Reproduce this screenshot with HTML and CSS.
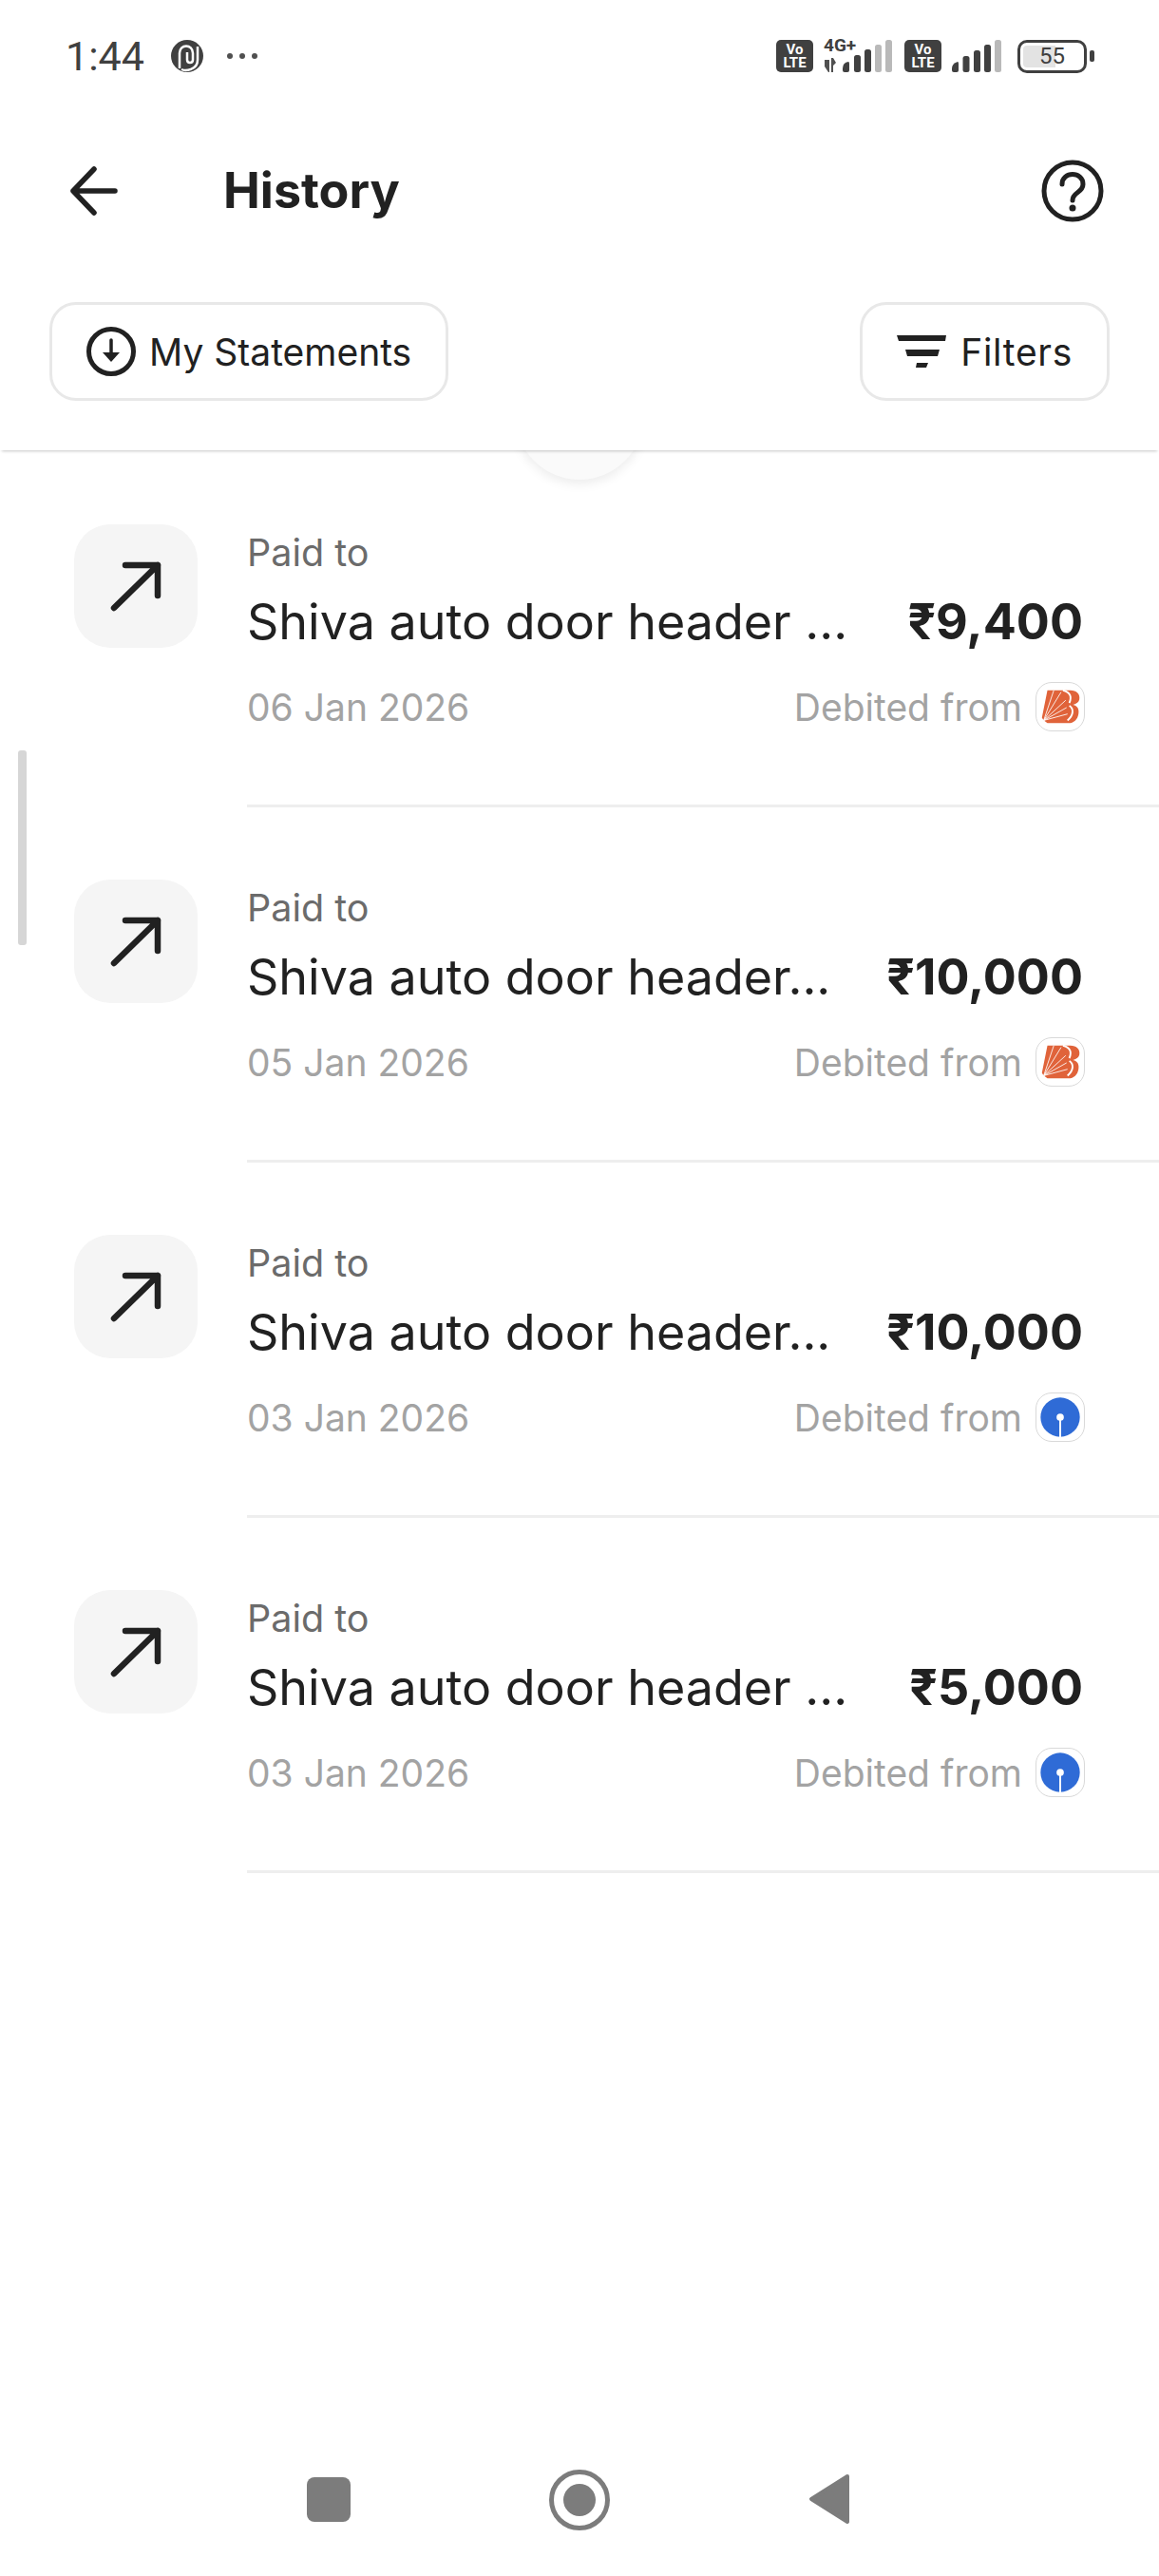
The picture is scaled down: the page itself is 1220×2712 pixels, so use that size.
FILE: index.html
```html
<!DOCTYPE html>
<html lang="en">

<head>
    <meta charset="UTF-8">
    <title>History</title>
    <link rel="stylesheet" href="styles.css">
</head>

<body>
    <svg class="defs" width="0" height="0">
        <symbol id="out-arrow" viewBox="0 0 54 54">
            <path d="M4 50 L50 5 M16 5 H50 V37" fill="none" stroke="#212121" stroke-width="6.500" stroke-linecap="round" stroke-linejoin="round" />
        </symbol>
        <symbol id="bob" viewBox="0 0 52 52">
            <path d="M12 8 H37 C44 8 48 12 47 18 C46.500 21 44 23 40 24 C45 25 47 29 46 34 C45 40 41 44 35 44 H12 C9 42 7 40 6 38 Z" fill="#e0633a" />
            <path d="M8 41 L19 8 M8 41 L27 10 M8 41 L32 19 M8 41 L33 27 M8 41 L34 34" fill="none" stroke="#fff" stroke-width="0.9" />
            <path d="M29 8 C37 10 39 15 36 22 M36 25 C41 28 41 35 34 41" fill="none" stroke="#fff" stroke-width="2" />
        </symbol>
        <symbol id="sbi" viewBox="0 0 52 52">
            <circle cx="26" cy="26" r="21.500" fill="#2f6bd6" />
            <circle cx="26" cy="26" r="4" fill="#fff" />
            <rect x="25" y="26" width="2" height="22" fill="#fff" />
        </symbol>
    </svg>

    <div class="status-bar">
        <span class="clock">1:44</span>
        <svg class="status-app" viewBox="0 0 34 34">
            <circle cx="17" cy="17" r="17" fill="#404040" />
            <path d="M9 30 V14 C9 4 23 4 23 14 V21 C23 25 17 25 17 21 V13 M28 7 V21 C28 32 15 33 11 31" fill="none" stroke="#fff" stroke-width="2.500" />
        </svg>
        <svg class="status-dots" viewBox="0 0 34 8">
            <circle cx="4" cy="4" r="3" fill="#505050" />
            <circle cx="17" cy="4" r="3" fill="#505050" />
            <circle cx="30" cy="4" r="3" fill="#505050" />
        </svg>
        <div class="status-right">
            <div class="volte"><span>Vo</span><span>LTE</span></div>
            <div class="net">
                <span class="net-label">4G+</span>
                <svg class="signal-a" viewBox="0 0 75 34">
                    <path d="M1 21 H6 V34 H5 L1 28 Z M8 19 H10 L13 24 L10 27 V34 H8 Z" fill="#505050" />
                    <path d="M20 30 Q20 24 26 23 Q27 23 27 25 V32 Q27 34 25 34 H22 Q20 34 20 32 Z" fill="#404040" />
                    <rect x="32" y="16" width="7" height="18" rx="2.500" fill="#404040" />
                    <rect x="43" y="10" width="7" height="24" rx="2.500" fill="#404040" />
                    <rect x="54" y="5" width="7" height="29" rx="2.500" fill="#b9b9b9" />
                    <rect x="65" y="0" width="7" height="34" rx="2.500" fill="#b9b9b9" />
                </svg>
            </div>
            <div class="volte"><span>Vo</span><span>LTE</span></div>
            <svg class="signal-b" viewBox="0 0 52 34">
                <path d="M0 30 Q0 25 6 23 Q7 23 7 25 V32 Q7 34 5 34 H2 Q0 34 0 32 Z" fill="#404040" />
                <rect x="11.500" y="17" width="7" height="17" rx="2.500" fill="#404040" />
                <rect x="23" y="11" width="7" height="23" rx="2.500" fill="#404040" />
                <rect x="34" y="5" width="7" height="29" rx="2.500" fill="#404040" />
                <rect x="45" y="0" width="7" height="34" rx="2.500" fill="#b9b9b9" />
            </svg>
            <div class="battery"><div class="battery-level">55</div></div>
            <div class="battery-tip"></div>
        </div>
    </div>

    <div class="app-header">
        <div class="title-bar">
            <svg class="back" viewBox="0 0 52 52">
                <path d="M48 26 H4 M26 3 L4 26 L26 49" fill="none" stroke="#212121" stroke-width="5.500" stroke-linecap="round" stroke-linejoin="round" />
            </svg>
            <h1>History</h1>
            <svg class="help" viewBox="0 0 66 66">
                <circle cx="33" cy="33" r="30" fill="none" stroke="#212121" stroke-width="5" />
                <path d="M22 26 C22 12 44 12 44 26 C44 35 33 34 33 43" fill="none" stroke="#212121" stroke-width="5" stroke-linecap="round" />
                <circle cx="33" cy="51" r="3.500" fill="#212121" />
            </svg>
        </div>
        <div class="toolbar">
            <div class="pill">
                <svg class="pill-icon" viewBox="0 0 52 52">
                    <circle cx="26" cy="26" r="23.500" fill="none" stroke="#212121" stroke-width="5" />
                    <path d="M26 14 V30" stroke="#212121" stroke-width="3.500" stroke-linecap="round" />
                    <path d="M17 27 H35 L26 37 Z" fill="#212121" />
                </svg>
                <span>My Statements</span>
            </div>
            <div class="pill pill-filter">
                <svg class="pill-icon filter-icon" viewBox="0 0 52 34">
                    <path d="M0 0 H52 L51 6 H2 Z M9 15 H45 L43 22 H11 Z M21 29 H33 L31 34 H20 Z" fill="#212121" />
                </svg>
                <span>Filters</span>
            </div>
        </div>
    </div>

    <div class="refresh-peek"></div>
    <div class="scroll-thumb"></div>

    <div class="list">
        <div class="row">
            <div class="tile"><svg class="tile-arrow"><use href="#out-arrow" /></svg></div>
            <div class="row-body">
                <div class="paid">Paid to</div>
                <div class="main-line">
                    <span class="name">Shiva auto door header ...</span>
                    <span class="amount">₹9,400</span>
                </div>
                <div class="meta-line">
                    <span class="date">06 Jan 2026</span>
                    <span class="debit">Debited from <span class="bank"><svg><use href="#bob" /></svg></span></span>
                </div>
            </div>
        </div>
        <div class="row">
            <div class="tile"><svg class="tile-arrow"><use href="#out-arrow" /></svg></div>
            <div class="row-body">
                <div class="paid">Paid to</div>
                <div class="main-line">
                    <span class="name">Shiva auto door header...</span>
                    <span class="amount">₹10,000</span>
                </div>
                <div class="meta-line">
                    <span class="date">05 Jan 2026</span>
                    <span class="debit">Debited from <span class="bank"><svg><use href="#bob" /></svg></span></span>
                </div>
            </div>
        </div>
        <div class="row">
            <div class="tile"><svg class="tile-arrow"><use href="#out-arrow" /></svg></div>
            <div class="row-body">
                <div class="paid">Paid to</div>
                <div class="main-line">
                    <span class="name">Shiva auto door header...</span>
                    <span class="amount">₹10,000</span>
                </div>
                <div class="meta-line">
                    <span class="date">03 Jan 2026</span>
                    <span class="debit">Debited from <span class="bank"><svg><use href="#sbi" /></svg></span></span>
                </div>
            </div>
        </div>
        <div class="row">
            <div class="tile"><svg class="tile-arrow"><use href="#out-arrow" /></svg></div>
            <div class="row-body">
                <div class="paid">Paid to</div>
                <div class="main-line">
                    <span class="name">Shiva auto door header ...</span>
                    <span class="amount">₹5,000</span>
                </div>
                <div class="meta-line">
                    <span class="date">03 Jan 2026</span>
                    <span class="debit">Debited from <span class="bank"><svg><use href="#sbi" /></svg></span></span>
                </div>
            </div>
        </div>
    </div>

    <div class="nav-bar">
        <div class="nav-square"></div>
        <svg class="nav-home" viewBox="0 0 64 64">
            <circle cx="32" cy="32" r="29.500" fill="none" stroke="#7c7c7c" stroke-width="5" />
            <circle cx="32" cy="32" r="17" fill="#7c7c7c" />
        </svg>
        <svg class="nav-back" viewBox="0 0 44 54">
            <path d="M41 3 L3 27 L41 51 Z" fill="#7c7c7c" stroke="#7c7c7c" stroke-width="4" stroke-linejoin="round" />
        </svg>
    </div>
</body>

</html>
```

FILE: styles.css
```css
body {
    margin: 0;
    padding: 0;
    width: 1220px;
    height: 2712px;
    background: #fff;
    color: #212121;
    font-family: "Inter", "Liberation Sans", sans-serif;
    display: flex;
    flex-direction: column;
    position: relative;
    overflow: hidden;
}

.defs {
    position: absolute;
}

/* status bar */
.status-bar {
    height: 118px;
    display: flex;
    align-items: center;
    padding: 0 68px 0 69px;
    color: #404040;
    box-sizing: border-box;
}

.clock {
    font-family: "Roboto", sans-serif;
    font-size: 43px;
    width: 111px;
}

.status-app {
    width: 34px;
    height: 34px;
}

.status-dots {
    width: 34px;
    height: 8px;
    margin-left: 24px;
}

.status-right {
    margin-left: auto;
    display: flex;
    align-items: center;
}

.volte {
    width: 39px;
    height: 34px;
    background: #404040;
    border-radius: 5px;
    color: #fff;
    font-family: "Roboto", sans-serif;
    font-size: 15px;
    font-weight: 700;
    line-height: 14px;
    display: flex;
    flex-direction: column;
    align-items: center;
    justify-content: center;
}

.net {
    position: relative;
    margin-left: 11px;
    width: 74px;
    height: 34px;
    margin-right: 11px;
}

.net-label {
    position: absolute;
    left: 0;
    top: -4px;
    font-family: "Roboto", sans-serif;
    font-size: 19px;
    font-weight: 700;
    line-height: 19px;
}

.signal-a {
    width: 75px;
    height: 34px;
    display: block;
}

.signal-b {
    width: 52px;
    height: 34px;
    margin-left: 11px;
}

.battery {
    width: 73px;
    height: 35px;
    margin-left: 17px;
    border: 3.500px solid #404040;
    border-radius: 10px;
    box-sizing: border-box;
    padding: 3px;
}

.battery-level {
    height: 100%;
    background: linear-gradient(to right, #e3e3e3 55%, transparent 55%);
    border-radius: 4px;
    font-family: "Roboto", sans-serif;
    font-size: 24px;
    line-height: 22px;
    text-align: center;
}

.battery-tip {
    width: 5px;
    height: 12px;
    margin-left: 3px;
    background: #404040;
    border-radius: 2px;
}

/* header */
.app-header {
    height: 356px;
    box-sizing: border-box;
    background: #fff;
    box-shadow: 0 3px 3px -2px rgba(0, 0, 0, 0.22);
    position: relative;
    z-index: 2;
}

.title-bar {
    height: 166px;
    display: flex;
    align-items: center;
    padding: 0 58px 0 73px;
}

.back {
    width: 52px;
    height: 52px;
}

h1 {
    margin: 0 0 2px 110px;
    font-size: 52px;
    font-weight: 700;
    flex: 1;
}

.help {
    width: 66px;
    height: 66px;
}

.toolbar {
    margin-top: 34px;
    display: flex;
    justify-content: space-between;
    padding: 0 52px;
}

.pill {
    height: 104px;
    box-sizing: border-box;
    border: 3px solid #e8e8e8;
    border-radius: 28px;
    padding: 0 36px;
    display: flex;
    align-items: center;
    gap: 14px;
    font-size: 39px;
}

.pill-filter {
    letter-spacing: 0.7px;
    gap: 15px;
}

.pill-icon {
    width: 52px;
    height: 52px;
}

.filter-icon {
    height: 34px;
}

.refresh-peek {
    position: absolute;
    left: 542px;
    top: 369px;
    width: 136px;
    height: 136px;
    border-radius: 50%;
    background: #fafafa;
    box-shadow: 0 4px 12px rgba(0, 0, 0, 0.08);
}

.scroll-thumb {
    position: absolute;
    left: 19px;
    top: 790px;
    width: 9px;
    height: 205px;
    background: #d6d6d6;
    border-radius: 3px;
}

/* transaction rows */
.list {
    padding-top: 2px;
}

.row {
    display: flex;
    padding-left: 78px;
}

.tile {
    width: 130px;
    height: 130px;
    margin-top: 76px;
    background: #f5f5f5;
    border-radius: 38px;
    display: flex;
    align-items: center;
    justify-content: center;
    flex-shrink: 0;
}

.tile-arrow {
    width: 54px;
    height: 54px;
}

.row-body {
    flex: 1;
    margin-left: 52px;
    padding: 76px 80px 72px 0;
    border-bottom: 3px solid #eee;
    display: flex;
    flex-direction: column;
    gap: 11px;
    height: 374px;
    box-sizing: border-box;
}

.paid {
    font-size: 39.500px;
    line-height: 60px;
    color: #6b6b6b;
}

.main-line,
.meta-line {
    display: flex;
    justify-content: space-between;
    align-items: center;
    height: 62px;
}

.name {
    font-size: 52px;
}

.amount {
    font-size: 52px;
    font-weight: 700;
}

.meta-line {
    margin-top: 17px;
    font-size: 39px;
    color: #a3a3a3;
}

.debit {
    display: flex;
    align-items: center;
    gap: 14px;
    margin-right: -2px;
}

.bank {
    width: 52px;
    height: 52px;
    box-sizing: border-box;
    border: 1px solid #d9d9d9;
    border-radius: 17px;
    overflow: hidden;
}

.bank svg {
    width: 50px;
    height: 50px;
    display: block;
}

/* bottom navigation */
.nav-bar {
    margin-top: auto;
    height: 160px;
    position: relative;
}

.nav-square {
    position: absolute;
    left: 323px;
    top: 56px;
    width: 46px;
    height: 47px;
    background: #7c7c7c;
    border-radius: 8px;
}

.nav-home {
    position: absolute;
    left: 578px;
    top: 48px;
    width: 64px;
    height: 64px;
}

.nav-back {
    position: absolute;
    left: 851px;
    top: 52px;
    width: 44px;
    height: 54px;
}
```
